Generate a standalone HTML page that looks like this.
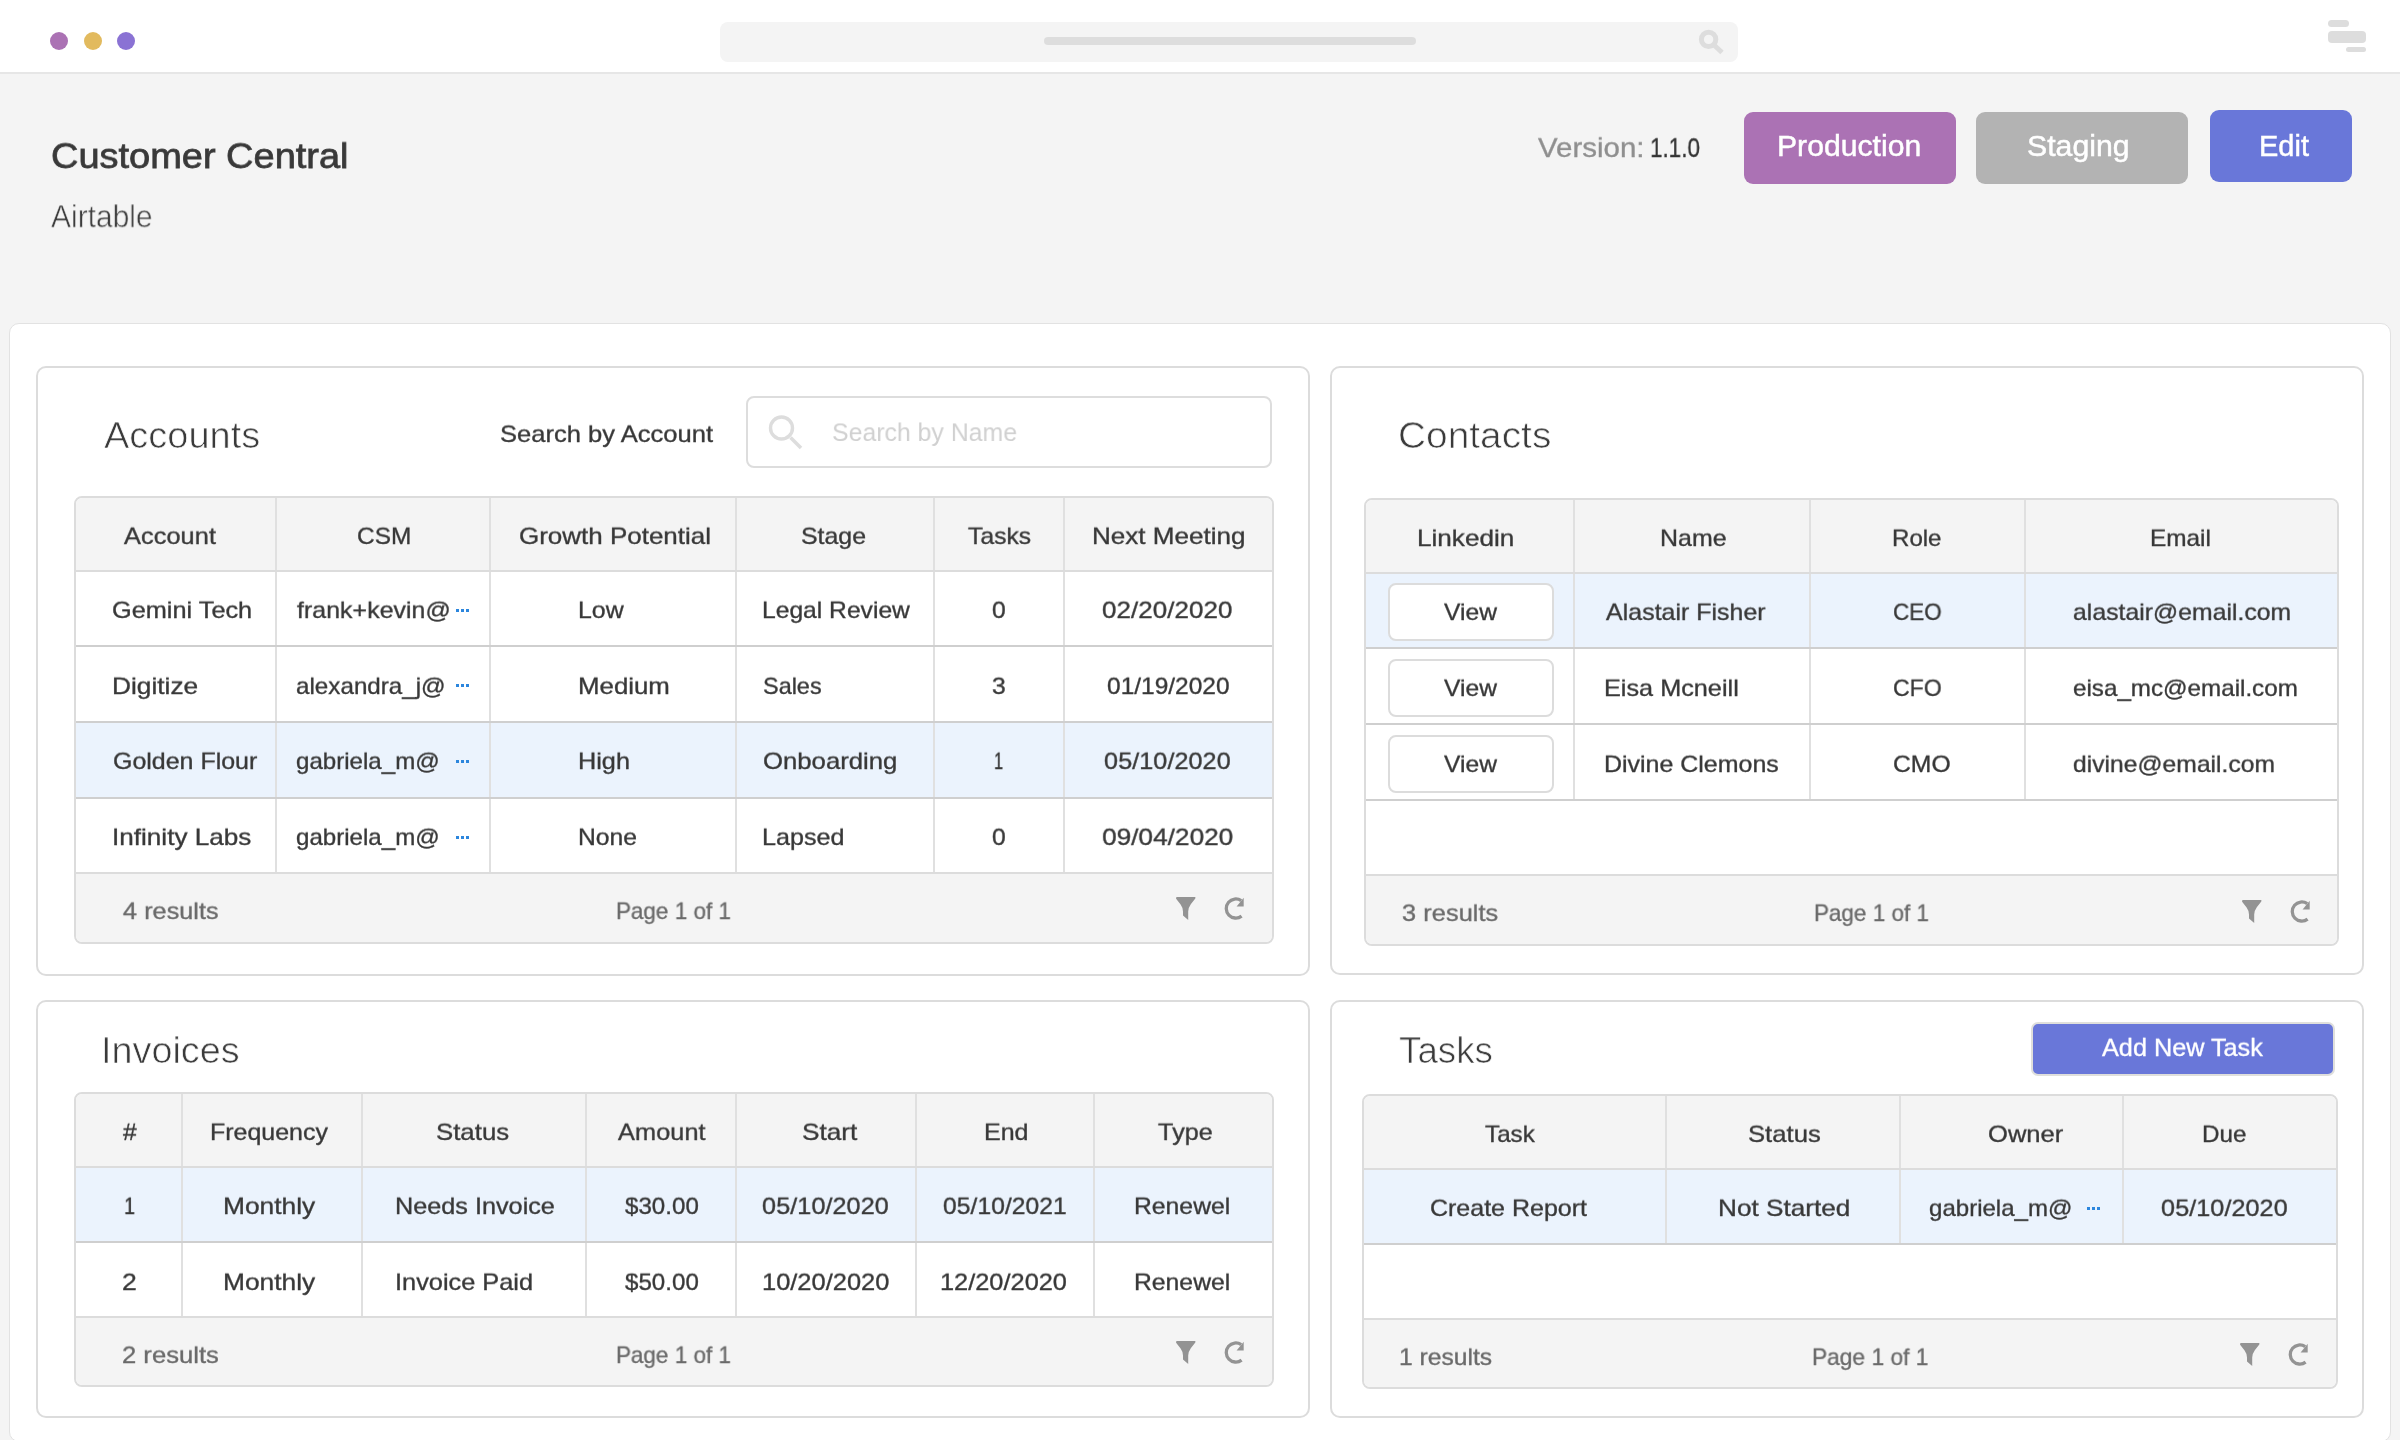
<!DOCTYPE html>
<html><head><meta charset="utf-8"><style>
html,body{margin:0;padding:0}
body{width:2400px;height:1440px;overflow:hidden;position:relative;background:#f4f4f4;font-family:'Liberation Sans', sans-serif}
body>div,body>svg{position:absolute;box-sizing:border-box}
.t{line-height:1;white-space:pre;transform-origin:0 0;will-change:transform}
</style></head><body>
<div style="left:0px;top:0px;width:2400px;height:72px;background:#ffffff;"></div>
<div style="left:0px;top:72px;width:2400px;height:2px;background:#e6e6e6;"></div>
<div style="left:50px;top:32px;width:18px;height:18px;border-radius:50%;background:#ab72b4"></div>
<div style="left:83.5px;top:32px;width:18px;height:18px;border-radius:50%;background:#e2ba5e"></div>
<div style="left:117px;top:32px;width:18px;height:18px;border-radius:50%;background:#8a72d4"></div>
<div style="left:720px;top:22px;width:1018px;height:40px;border-radius:8px;background:#f4f4f4"></div>
<div style="left:1044px;top:37px;width:372px;height:8px;border-radius:4px;background:#dddddd"></div>
<svg style="left:1690px;top:24px" width="40" height="36" viewBox="0 0 40 36"><circle cx="18.6" cy="15.4" r="7.2" fill="none" stroke="#dddddd" stroke-width="5"/><path d="M24 21 L32 28.5" stroke="#dddddd" stroke-width="5"/></svg>
<div style="left:2328px;top:20px;width:21px;height:7px;border-radius:3.5px;background:#dddddd"></div>
<div style="left:2328px;top:31px;width:38px;height:12px;border-radius:4px;background:#dddddd"></div>
<div style="left:2346px;top:47px;width:20px;height:5px;border-radius:2.5px;background:#dddddd"></div>
<div style="left:1744px;top:112px;width:212px;height:72px;border-radius:9px;background:#ab72b4"></div>
<div style="left:1976px;top:112px;width:212px;height:72px;border-radius:9px;background:#b3b3b3"></div>
<div style="left:2210px;top:110px;width:142px;height:72px;border-radius:9px;background:#6977d9"></div>
<div style="left:9px;top:323px;width:2382px;height:1119px;border:1px solid #e2e2e2;border-radius:10px;background:#ffffff"></div>
<div style="left:36px;top:366px;width:1274px;height:610px;border:2px solid #dcdcdc;border-radius:10px;background:#ffffff"></div>
<div style="left:1330px;top:366px;width:1034px;height:609px;border:2px solid #dcdcdc;border-radius:10px;background:#ffffff"></div>
<div style="left:36px;top:1000px;width:1274px;height:418px;border:2px solid #dcdcdc;border-radius:10px;background:#ffffff"></div>
<div style="left:1330px;top:1000px;width:1034px;height:418px;border:2px solid #dcdcdc;border-radius:10px;background:#ffffff"></div>
<div style="left:746px;top:396px;width:526px;height:72px;border:2px solid #dddddd;border-radius:8px;background:#ffffff"></div>
<svg style="left:762px;top:408px" width="48" height="48" viewBox="0 0 48 48"><circle cx="19.5" cy="20" r="11" fill="none" stroke="#dddddd" stroke-width="3.4"/><path d="M28.5 29.5 L39 40" stroke="#dddddd" stroke-width="3.6"/></svg>
<div style="left:74px;top:496px;width:1200px;height:448px;border:2px solid #dcdcdc;border-radius:8px;background:#ffffff;overflow:hidden"><div style="position:absolute;left:0px;top:0px;width:1196px;height:72px;background:#f4f4f4"></div><div style="position:absolute;left:0px;top:225px;width:1196px;height:74px;background:#ebf3fd"></div><div style="position:absolute;left:0px;top:374px;width:1196px;height:70px;background:#f4f4f4"></div><div style="position:absolute;left:199px;top:0px;width:2px;height:374px;background:#e0e0e0"></div><div style="position:absolute;left:413px;top:0px;width:2px;height:374px;background:#e0e0e0"></div><div style="position:absolute;left:659px;top:0px;width:2px;height:374px;background:#e0e0e0"></div><div style="position:absolute;left:857px;top:0px;width:2px;height:374px;background:#e0e0e0"></div><div style="position:absolute;left:987px;top:0px;width:2px;height:374px;background:#e0e0e0"></div><div style="position:absolute;left:0px;top:72px;width:1196px;height:2px;background:#dcdcdc"></div><div style="position:absolute;left:0px;top:147px;width:1196px;height:2px;background:#cfcfcf"></div><div style="position:absolute;left:0px;top:223px;width:1196px;height:2px;background:#cfcfcf"></div><div style="position:absolute;left:0px;top:299px;width:1196px;height:2px;background:#cfcfcf"></div><div style="position:absolute;left:0px;top:374px;width:1196px;height:2px;background:#dcdcdc"></div></div>
<div style="left:456px;top:609px;width:3px;height:3px;background:#2c86dd"></div>
<div style="left:461px;top:609px;width:3px;height:3px;background:#2c86dd"></div>
<div style="left:466px;top:609px;width:3px;height:3px;background:#2c86dd"></div>
<div style="left:456px;top:684px;width:3px;height:3px;background:#2c86dd"></div>
<div style="left:461px;top:684px;width:3px;height:3px;background:#2c86dd"></div>
<div style="left:466px;top:684px;width:3px;height:3px;background:#2c86dd"></div>
<div style="left:456px;top:760px;width:3px;height:3px;background:#2c86dd"></div>
<div style="left:461px;top:760px;width:3px;height:3px;background:#2c86dd"></div>
<div style="left:466px;top:760px;width:3px;height:3px;background:#2c86dd"></div>
<div style="left:456px;top:836px;width:3px;height:3px;background:#2c86dd"></div>
<div style="left:461px;top:836px;width:3px;height:3px;background:#2c86dd"></div>
<div style="left:466px;top:836px;width:3px;height:3px;background:#2c86dd"></div>
<svg style="left:1170px;top:890px" width="80" height="36" viewBox="0 0 80 36"><path d="M6 8.2 Q6 7.1 7.1 7.1 L24.7 7.1 Q26 7.1 25.3 8.4 L20.8 14.2 Q18.2 17.8 18.2 21.5 L18.2 30 L13 25.6 L13 21.5 Q13 17.8 10.6 14.5 L6.3 8.9 Z" fill="#939393"/><path d="M71.6 26.1 A9.55 9.55 0 1 1 71.2 10.6" fill="none" stroke="#939393" stroke-width="3.3"/><path d="M73.7 7.8 L73.7 16.5 L66.6 16.5 Z" fill="#939393"/></svg>
<div style="left:1364px;top:498px;width:975px;height:448px;border:2px solid #dcdcdc;border-radius:8px;background:#ffffff;overflow:hidden"><div style="position:absolute;left:0px;top:0px;width:971px;height:72px;background:#f4f4f4"></div><div style="position:absolute;left:0px;top:74px;width:971px;height:73px;background:#ebf3fd"></div><div style="position:absolute;left:0px;top:374px;width:971px;height:70px;background:#f4f4f4"></div><div style="position:absolute;left:207px;top:0px;width:2px;height:301px;background:#e0e0e0"></div><div style="position:absolute;left:443px;top:0px;width:2px;height:301px;background:#e0e0e0"></div><div style="position:absolute;left:658px;top:0px;width:2px;height:301px;background:#e0e0e0"></div><div style="position:absolute;left:0px;top:72px;width:971px;height:2px;background:#dcdcdc"></div><div style="position:absolute;left:0px;top:147px;width:971px;height:2px;background:#cfcfcf"></div><div style="position:absolute;left:0px;top:223px;width:971px;height:2px;background:#cfcfcf"></div><div style="position:absolute;left:0px;top:299px;width:971px;height:2px;background:#cfcfcf"></div><div style="position:absolute;left:0px;top:374px;width:971px;height:2px;background:#dcdcdc"></div></div>
<div style="left:1388px;top:583px;width:166px;height:58px;border:2px solid #dcdcdc;border-radius:8px;background:#ffffff"></div>
<div style="left:1388px;top:659px;width:166px;height:58px;border:2px solid #dcdcdc;border-radius:8px;background:#ffffff"></div>
<div style="left:1388px;top:735px;width:166px;height:58px;border:2px solid #dcdcdc;border-radius:8px;background:#ffffff"></div>
<svg style="left:2236px;top:893px" width="80" height="36" viewBox="0 0 80 36"><path d="M6 8.2 Q6 7.1 7.1 7.1 L24.7 7.1 Q26 7.1 25.3 8.4 L20.8 14.2 Q18.2 17.8 18.2 21.5 L18.2 30 L13 25.6 L13 21.5 Q13 17.8 10.6 14.5 L6.3 8.9 Z" fill="#939393"/><path d="M71.6 26.1 A9.55 9.55 0 1 1 71.2 10.6" fill="none" stroke="#939393" stroke-width="3.3"/><path d="M73.7 7.8 L73.7 16.5 L66.6 16.5 Z" fill="#939393"/></svg>
<div style="left:74px;top:1092px;width:1200px;height:295px;border:2px solid #dcdcdc;border-radius:8px;background:#ffffff;overflow:hidden"><div style="position:absolute;left:0px;top:0px;width:1196px;height:72px;background:#f4f4f4"></div><div style="position:absolute;left:0px;top:74px;width:1196px;height:73px;background:#ebf3fd"></div><div style="position:absolute;left:0px;top:222px;width:1196px;height:69px;background:#f4f4f4"></div><div style="position:absolute;left:105px;top:0px;width:2px;height:222px;background:#e0e0e0"></div><div style="position:absolute;left:285px;top:0px;width:2px;height:222px;background:#e0e0e0"></div><div style="position:absolute;left:509px;top:0px;width:2px;height:222px;background:#e0e0e0"></div><div style="position:absolute;left:659px;top:0px;width:2px;height:222px;background:#e0e0e0"></div><div style="position:absolute;left:839px;top:0px;width:2px;height:222px;background:#e0e0e0"></div><div style="position:absolute;left:1017px;top:0px;width:2px;height:222px;background:#e0e0e0"></div><div style="position:absolute;left:0px;top:72px;width:1196px;height:2px;background:#dcdcdc"></div><div style="position:absolute;left:0px;top:147px;width:1196px;height:2px;background:#cfcfcf"></div><div style="position:absolute;left:0px;top:222px;width:1196px;height:2px;background:#dcdcdc"></div></div>
<svg style="left:1170px;top:1334px" width="80" height="36" viewBox="0 0 80 36"><path d="M6 8.2 Q6 7.1 7.1 7.1 L24.7 7.1 Q26 7.1 25.3 8.4 L20.8 14.2 Q18.2 17.8 18.2 21.5 L18.2 30 L13 25.6 L13 21.5 Q13 17.8 10.6 14.5 L6.3 8.9 Z" fill="#939393"/><path d="M71.6 26.1 A9.55 9.55 0 1 1 71.2 10.6" fill="none" stroke="#939393" stroke-width="3.3"/><path d="M73.7 7.8 L73.7 16.5 L66.6 16.5 Z" fill="#939393"/></svg>
<div style="left:2031px;top:1022px;width:304px;height:54px;border:2px solid #dfdfdc;border-radius:7px;background:#6977d9"></div>
<div style="left:1362px;top:1094px;width:976px;height:295px;border:2px solid #dcdcdc;border-radius:8px;background:#ffffff;overflow:hidden"><div style="position:absolute;left:0px;top:0px;width:972px;height:72px;background:#f4f4f4"></div><div style="position:absolute;left:0px;top:74px;width:972px;height:73px;background:#ebf3fd"></div><div style="position:absolute;left:0px;top:222px;width:972px;height:69px;background:#f4f4f4"></div><div style="position:absolute;left:301px;top:0px;width:2px;height:149px;background:#e0e0e0"></div><div style="position:absolute;left:535px;top:0px;width:2px;height:149px;background:#e0e0e0"></div><div style="position:absolute;left:758px;top:0px;width:2px;height:149px;background:#e0e0e0"></div><div style="position:absolute;left:0px;top:72px;width:972px;height:2px;background:#dcdcdc"></div><div style="position:absolute;left:0px;top:147px;width:972px;height:2px;background:#cfcfcf"></div><div style="position:absolute;left:0px;top:222px;width:972px;height:2px;background:#dcdcdc"></div></div>
<div style="left:2087px;top:1207px;width:3px;height:3px;background:#2c86dd"></div>
<div style="left:2092px;top:1207px;width:3px;height:3px;background:#2c86dd"></div>
<div style="left:2097px;top:1207px;width:3px;height:3px;background:#2c86dd"></div>
<svg style="left:2234px;top:1336px" width="80" height="36" viewBox="0 0 80 36"><path d="M6 8.2 Q6 7.1 7.1 7.1 L24.7 7.1 Q26 7.1 25.3 8.4 L20.8 14.2 Q18.2 17.8 18.2 21.5 L18.2 30 L13 25.6 L13 21.5 Q13 17.8 10.6 14.5 L6.3 8.9 Z" fill="#939393"/><path d="M71.6 26.1 A9.55 9.55 0 1 1 71.2 10.6" fill="none" stroke="#939393" stroke-width="3.3"/><path d="M73.7 7.8 L73.7 16.5 L66.6 16.5 Z" fill="#939393"/></svg>
<div class="t" style="left:51.17px;top:137px;font-size:37px;color:#393939;font-weight:400;-webkit-text-stroke:0.8px #393939;transform-origin:0 31.49px;transform:scale(1.0261,0.9488)">Customer Central</div>
<div class="t" style="left:50.90px;top:202px;font-size:30px;color:#3c3c3c;font-weight:400;-webkit-text-stroke:0.5px #f4f4f4;transform-origin:0 24.69px;transform:scale(0.9980,1.0634)">Airtable</div>
<div class="t" style="left:1538.20px;top:134px;font-size:28px;color:#8f8f8f;font-weight:400;-webkit-text-stroke:0.35px #8f8f8f;transform-origin:0 23.25px;transform:scale(1.0525,0.9845)">Version:</div>
<div class="t" style="left:1650.20px;top:134px;font-size:28px;color:#333333;font-weight:400;-webkit-text-stroke:0.35px #333333;transform-origin:0 23.25px;transform:scale(0.8017,0.9845)">1.1.0</div>
<div class="t" style="left:1776.78px;top:132px;font-size:28.5px;color:#ffffff;font-weight:400;-webkit-text-stroke:0.45px #ffffff;transform-origin:0 24.25px;transform:scale(1.0586,1.0153)">Production</div>
<div class="t" style="left:2026.84px;top:132px;font-size:28.5px;color:#ffffff;font-weight:400;-webkit-text-stroke:0.45px #ffffff;transform-origin:0 24.25px;transform:scale(1.0617,1.0153)">Staging</div>
<div class="t" style="left:2258.87px;top:132px;font-size:28.5px;color:#ffffff;font-weight:400;-webkit-text-stroke:0.45px #ffffff;transform-origin:0 24.25px;transform:scale(1.0170,1.0153)">Edit</div>
<div class="t" style="left:104.26px;top:418px;font-size:36.5px;color:#3a3a3a;font-weight:400;-webkit-text-stroke:0.7px #ffffff;transform-origin:0 29.69px;transform:scale(1.0399,0.9912)">Accounts</div>
<div class="t" style="left:499.84px;top:422px;font-size:24px;color:#383838;font-weight:400;-webkit-text-stroke:0.35px #383838;transform-origin:0 20.25px;transform:scale(1.0643,0.9713)">Search by Account</div>
<div class="t" style="left:832.46px;top:419px;font-size:26.5px;color:#d0d0d0;font-weight:400;transform-origin:0 22.00px;transform:scale(0.9374,0.9778)">Search by Name</div>
<div class="t" style="left:124.20px;top:525px;font-size:23.2px;color:#383838;font-weight:400;-webkit-text-stroke:0.35px #383838;transform-origin:0 19.25px;transform:scale(1.0964,0.9656)">Account</div>
<div class="t" style="left:356.85px;top:525px;font-size:23.2px;color:#383838;font-weight:400;-webkit-text-stroke:0.35px #383838;transform-origin:0 19.25px;transform:scale(1.0531,0.9656)">CSM</div>
<div class="t" style="left:518.58px;top:525px;font-size:23.2px;color:#383838;font-weight:400;-webkit-text-stroke:0.35px #383838;transform-origin:0 19.25px;transform:scale(1.1201,0.9656)">Growth Potential</div>
<div class="t" style="left:800.63px;top:525px;font-size:23.2px;color:#383838;font-weight:400;-webkit-text-stroke:0.35px #383838;transform-origin:0 19.25px;transform:scale(1.0729,0.9656)">Stage</div>
<div class="t" style="left:967.60px;top:525px;font-size:23.2px;color:#383838;font-weight:400;-webkit-text-stroke:0.35px #383838;transform-origin:0 19.25px;transform:scale(1.0644,0.9656)">Tasks</div>
<div class="t" style="left:1091.95px;top:525px;font-size:23.2px;color:#383838;font-weight:400;-webkit-text-stroke:0.35px #383838;transform-origin:0 19.25px;transform:scale(1.1241,0.9656)">Next Meeting</div>
<div class="t" style="left:111.81px;top:599px;font-size:23.2px;color:#383838;font-weight:400;-webkit-text-stroke:0.35px #383838;transform-origin:0 19.25px;transform:scale(1.0913,0.9656)">Gemini Tech</div>
<div class="t" style="left:297.30px;top:599px;font-size:23.2px;color:#383838;font-weight:400;-webkit-text-stroke:0.35px #383838;transform-origin:0 19.25px;transform:scale(1.0766,0.9656)">frank+kevin@</div>
<div class="t" style="left:577.95px;top:599px;font-size:23.2px;color:#383838;font-weight:400;-webkit-text-stroke:0.35px #383838;transform-origin:0 19.25px;transform:scale(1.0732,0.9656)">Low</div>
<div class="t" style="left:761.98px;top:599px;font-size:23.2px;color:#383838;font-weight:400;-webkit-text-stroke:0.35px #383838;transform-origin:0 19.25px;transform:scale(1.0623,0.9656)">Legal Review</div>
<div class="t" style="left:992.33px;top:599px;font-size:23.2px;color:#383838;font-weight:400;-webkit-text-stroke:0.35px #383838;transform-origin:0 19.25px;transform:scale(1.0727,0.9656)">0</div>
<div class="t" style="left:1102.48px;top:599px;font-size:23.2px;color:#383838;font-weight:400;-webkit-text-stroke:0.35px #383838;transform-origin:0 19.25px;transform:scale(1.1243,0.9656)">02/20/2020</div>
<div class="t" style="left:111.53px;top:675px;font-size:23.2px;color:#383838;font-weight:400;-webkit-text-stroke:0.35px #383838;transform-origin:0 19.25px;transform:scale(1.1329,0.9656)">Digitize</div>
<div class="t" style="left:296.26px;top:675px;font-size:23.2px;color:#383838;font-weight:400;-webkit-text-stroke:0.35px #383838;transform-origin:0 19.25px;transform:scale(1.0433,0.9656)">alexandra_j@</div>
<div class="t" style="left:577.87px;top:675px;font-size:23.2px;color:#383838;font-weight:400;-webkit-text-stroke:0.35px #383838;transform-origin:0 19.25px;transform:scale(1.1139,0.9656)">Medium</div>
<div class="t" style="left:763.09px;top:675px;font-size:23.2px;color:#383838;font-weight:400;-webkit-text-stroke:0.35px #383838;transform-origin:0 19.25px;transform:scale(1.0105,0.9656)">Sales</div>
<div class="t" style="left:992.33px;top:675px;font-size:23.2px;color:#383838;font-weight:400;-webkit-text-stroke:0.35px #383838;transform-origin:0 19.25px;transform:scale(1.0727,0.9656)">3</div>
<div class="t" style="left:1106.64px;top:675px;font-size:23.2px;color:#383838;font-weight:400;-webkit-text-stroke:0.35px #383838;transform-origin:0 19.25px;transform:scale(1.0557,0.9656)">01/19/2020</div>
<div class="t" style="left:112.72px;top:750px;font-size:23.2px;color:#383838;font-weight:400;-webkit-text-stroke:0.35px #383838;transform-origin:0 19.25px;transform:scale(1.0767,0.9656)">Golden Flour</div>
<div class="t" style="left:296.26px;top:750px;font-size:23.2px;color:#383838;font-weight:400;-webkit-text-stroke:0.35px #383838;transform-origin:0 19.25px;transform:scale(1.0390,0.9656)">gabriela_m@</div>
<div class="t" style="left:577.92px;top:750px;font-size:23.2px;color:#383838;font-weight:400;-webkit-text-stroke:0.35px #383838;transform-origin:0 19.25px;transform:scale(1.0889,0.9656)">High</div>
<div class="t" style="left:762.99px;top:750px;font-size:23.2px;color:#383838;font-weight:400;-webkit-text-stroke:0.35px #383838;transform-origin:0 19.25px;transform:scale(1.1092,0.9656)">Onboarding</div>
<div class="t" style="left:994.49px;top:750px;font-size:23.2px;color:#383838;font-weight:400;-webkit-text-stroke:0.35px #383838;transform-origin:0 19.25px;transform:scale(0.7091,0.9656)">1</div>
<div class="t" style="left:1104.31px;top:750px;font-size:23.2px;color:#383838;font-weight:400;-webkit-text-stroke:0.35px #383838;transform-origin:0 19.25px;transform:scale(1.0913,0.9656)">05/10/2020</div>
<div class="t" style="left:111.55px;top:826px;font-size:23.2px;color:#383838;font-weight:400;-webkit-text-stroke:0.35px #383838;transform-origin:0 19.25px;transform:scale(1.1264,0.9656)">Infinity Labs</div>
<div class="t" style="left:296.26px;top:826px;font-size:23.2px;color:#383838;font-weight:400;-webkit-text-stroke:0.35px #383838;transform-origin:0 19.25px;transform:scale(1.0390,0.9656)">gabriela_m@</div>
<div class="t" style="left:577.97px;top:826px;font-size:23.2px;color:#383838;font-weight:400;-webkit-text-stroke:0.35px #383838;transform-origin:0 19.25px;transform:scale(1.0642,0.9656)">None</div>
<div class="t" style="left:761.93px;top:826px;font-size:23.2px;color:#383838;font-weight:400;-webkit-text-stroke:0.35px #383838;transform-origin:0 19.25px;transform:scale(1.0836,0.9656)">Lapsed</div>
<div class="t" style="left:992.33px;top:826px;font-size:23.2px;color:#383838;font-weight:400;-webkit-text-stroke:0.35px #383838;transform-origin:0 19.25px;transform:scale(1.0727,0.9656)">0</div>
<div class="t" style="left:1102.47px;top:826px;font-size:23.2px;color:#383838;font-weight:400;-webkit-text-stroke:0.35px #383838;transform-origin:0 19.25px;transform:scale(1.1313,0.9656)">09/04/2020</div>
<div class="t" style="left:123.40px;top:900px;font-size:23.4px;color:#6a6a6a;font-weight:400;-webkit-text-stroke:0.35px #6a6a6a;transform-origin:0 19.25px;transform:scale(1.0807,0.9713)">4 results</div>
<div class="t" style="left:615.98px;top:900px;font-size:23.4px;color:#6a6a6a;font-weight:400;-webkit-text-stroke:0.35px #6a6a6a;transform-origin:0 19.25px;transform:scale(0.9598,0.9713)">Page 1 of 1</div>
<div class="t" style="left:1398.07px;top:418px;font-size:36.5px;color:#3a3a3a;font-weight:400;-webkit-text-stroke:0.7px #ffffff;transform-origin:0 29.69px;transform:scale(1.0643,0.9912)">Contacts</div>
<div class="t" style="left:1416.65px;top:527px;font-size:23.2px;color:#383838;font-weight:400;-webkit-text-stroke:0.35px #383838;transform-origin:0 19.25px;transform:scale(1.1265,0.9656)">Linkedin</div>
<div class="t" style="left:1659.75px;top:527px;font-size:23.2px;color:#383838;font-weight:400;-webkit-text-stroke:0.35px #383838;transform-origin:0 19.25px;transform:scale(1.0763,0.9656)">Name</div>
<div class="t" style="left:1891.52px;top:527px;font-size:23.2px;color:#383838;font-weight:400;-webkit-text-stroke:0.35px #383838;transform-origin:0 19.25px;transform:scale(1.0378,0.9656)">Role</div>
<div class="t" style="left:2149.80px;top:527px;font-size:23.2px;color:#383838;font-weight:400;-webkit-text-stroke:0.35px #383838;transform-origin:0 19.25px;transform:scale(1.0509,0.9656)">Email</div>
<div class="t" style="left:1443.90px;top:601px;font-size:23.2px;color:#383838;font-weight:400;-webkit-text-stroke:0.35px #383838;transform-origin:0 19.25px;transform:scale(1.0620,0.9656)">View</div>
<div class="t" style="left:1605.90px;top:601px;font-size:23.2px;color:#383838;font-weight:400;-webkit-text-stroke:0.35px #383838;transform-origin:0 19.25px;transform:scale(1.0770,0.9656)">Alastair Fisher</div>
<div class="t" style="left:1892.63px;top:601px;font-size:23.2px;color:#383838;font-weight:400;-webkit-text-stroke:0.35px #383838;transform-origin:0 19.25px;transform:scale(0.9673,0.9656)">CEO</div>
<div class="t" style="left:2072.53px;top:601px;font-size:23.2px;color:#383838;font-weight:400;-webkit-text-stroke:0.35px #383838;transform-origin:0 19.25px;transform:scale(1.0698,0.9656)">alastair@email.com</div>
<div class="t" style="left:1443.90px;top:677px;font-size:23.2px;color:#383838;font-weight:400;-webkit-text-stroke:0.35px #383838;transform-origin:0 19.25px;transform:scale(1.0620,0.9656)">View</div>
<div class="t" style="left:1603.72px;top:677px;font-size:23.2px;color:#383838;font-weight:400;-webkit-text-stroke:0.35px #383838;transform-origin:0 19.25px;transform:scale(1.0892,0.9656)">Eisa Mcneill</div>
<div class="t" style="left:1892.61px;top:677px;font-size:23.2px;color:#383838;font-weight:400;-webkit-text-stroke:0.35px #383838;transform-origin:0 19.25px;transform:scale(0.9936,0.9656)">CFO</div>
<div class="t" style="left:2072.56px;top:677px;font-size:23.2px;color:#383838;font-weight:400;-webkit-text-stroke:0.35px #383838;transform-origin:0 19.25px;transform:scale(1.0427,0.9656)">eisa_mc@email.com</div>
<div class="t" style="left:1443.90px;top:753px;font-size:23.2px;color:#383838;font-weight:400;-webkit-text-stroke:0.35px #383838;transform-origin:0 19.25px;transform:scale(1.0620,0.9656)">View</div>
<div class="t" style="left:1603.75px;top:753px;font-size:23.2px;color:#383838;font-weight:400;-webkit-text-stroke:0.35px #383838;transform-origin:0 19.25px;transform:scale(1.0763,0.9656)">Divine Clemons</div>
<div class="t" style="left:1892.53px;top:753px;font-size:23.2px;color:#383838;font-weight:400;-webkit-text-stroke:0.35px #383838;transform-origin:0 19.25px;transform:scale(1.0654,0.9656)">CMO</div>
<div class="t" style="left:2072.54px;top:753px;font-size:23.2px;color:#383838;font-weight:400;-webkit-text-stroke:0.35px #383838;transform-origin:0 19.25px;transform:scale(1.0644,0.9656)">divine@email.com</div>
<div class="t" style="left:1402.31px;top:902px;font-size:23.4px;color:#6a6a6a;font-weight:400;-webkit-text-stroke:0.35px #6a6a6a;transform-origin:0 19.25px;transform:scale(1.0874,0.9713)">3 results</div>
<div class="t" style="left:1813.98px;top:902px;font-size:23.4px;color:#6a6a6a;font-weight:400;-webkit-text-stroke:0.35px #6a6a6a;transform-origin:0 19.25px;transform:scale(0.9598,0.9713)">Page 1 of 1</div>
<div class="t" style="left:100.76px;top:1033px;font-size:36.5px;color:#3a3a3a;font-weight:400;-webkit-text-stroke:0.7px #ffffff;transform-origin:0 29.69px;transform:scale(1.0352,0.9912)">Invoices</div>
<div class="t" style="left:122.90px;top:1121px;font-size:23.2px;color:#383838;font-weight:400;-webkit-text-stroke:0.35px #383838;transform-origin:0 19.25px;transform:scale(1.0615,0.9656)">#</div>
<div class="t" style="left:209.75px;top:1121px;font-size:23.2px;color:#383838;font-weight:400;-webkit-text-stroke:0.35px #383838;transform-origin:0 19.25px;transform:scale(1.0759,0.9656)">Frequency</div>
<div class="t" style="left:436.09px;top:1121px;font-size:23.2px;color:#383838;font-weight:400;-webkit-text-stroke:0.35px #383838;transform-origin:0 19.25px;transform:scale(1.1125,0.9656)">Status</div>
<div class="t" style="left:617.90px;top:1121px;font-size:23.2px;color:#383838;font-weight:400;-webkit-text-stroke:0.35px #383838;transform-origin:0 19.25px;transform:scale(1.0950,0.9656)">Amount</div>
<div class="t" style="left:801.77px;top:1121px;font-size:23.2px;color:#383838;font-weight:400;-webkit-text-stroke:0.35px #383838;transform-origin:0 19.25px;transform:scale(1.1313,0.9656)">Start</div>
<div class="t" style="left:983.64px;top:1121px;font-size:23.2px;color:#383838;font-weight:400;-webkit-text-stroke:0.35px #383838;transform-origin:0 19.25px;transform:scale(1.0789,0.9656)">End</div>
<div class="t" style="left:1157.50px;top:1121px;font-size:23.2px;color:#383838;font-weight:400;-webkit-text-stroke:0.35px #383838;transform-origin:0 19.25px;transform:scale(1.0898,0.9656)">Type</div>
<div class="t" style="left:123.74px;top:1195px;font-size:23.2px;color:#383838;font-weight:400;-webkit-text-stroke:0.35px #383838;transform-origin:0 19.25px;transform:scale(0.8636,0.9656)">1</div>
<div class="t" style="left:223.23px;top:1195px;font-size:23.2px;color:#383838;font-weight:400;-webkit-text-stroke:0.35px #383838;transform-origin:0 19.25px;transform:scale(1.1367,0.9656)">Monthly</div>
<div class="t" style="left:395.32px;top:1195px;font-size:23.2px;color:#383838;font-weight:400;-webkit-text-stroke:0.35px #383838;transform-origin:0 19.25px;transform:scale(1.0882,0.9656)">Needs Invoice</div>
<div class="t" style="left:624.90px;top:1195px;font-size:23.2px;color:#383838;font-weight:400;-webkit-text-stroke:0.35px #383838;transform-origin:0 19.25px;transform:scale(1.0400,0.9656)">$30.00</div>
<div class="t" style="left:762.31px;top:1195px;font-size:23.2px;color:#383838;font-weight:400;-webkit-text-stroke:0.35px #383838;transform-origin:0 19.25px;transform:scale(1.0922,0.9656)">05/10/2020</div>
<div class="t" style="left:942.83px;top:1195px;font-size:23.2px;color:#383838;font-weight:400;-webkit-text-stroke:0.35px #383838;transform-origin:0 19.25px;transform:scale(1.0658,0.9656)">05/10/2021</div>
<div class="t" style="left:1133.77px;top:1195px;font-size:23.2px;color:#383838;font-weight:400;-webkit-text-stroke:0.35px #383838;transform-origin:0 19.25px;transform:scale(1.0667,0.9656)">Renewel</div>
<div class="t" style="left:121.95px;top:1271px;font-size:23.2px;color:#383838;font-weight:400;-webkit-text-stroke:0.35px #383838;transform-origin:0 19.25px;transform:scale(1.1455,0.9656)">2</div>
<div class="t" style="left:223.23px;top:1271px;font-size:23.2px;color:#383838;font-weight:400;-webkit-text-stroke:0.35px #383838;transform-origin:0 19.25px;transform:scale(1.1367,0.9656)">Monthly</div>
<div class="t" style="left:395.31px;top:1271px;font-size:23.2px;color:#383838;font-weight:400;-webkit-text-stroke:0.35px #383838;transform-origin:0 19.25px;transform:scale(1.0927,0.9656)">Invoice Paid</div>
<div class="t" style="left:624.90px;top:1271px;font-size:23.2px;color:#383838;font-weight:400;-webkit-text-stroke:0.35px #383838;transform-origin:0 19.25px;transform:scale(1.0400,0.9656)">$50.00</div>
<div class="t" style="left:761.70px;top:1271px;font-size:23.2px;color:#383838;font-weight:400;-webkit-text-stroke:0.35px #383838;transform-origin:0 19.25px;transform:scale(1.0974,0.9656)">10/20/2020</div>
<div class="t" style="left:940.01px;top:1271px;font-size:23.2px;color:#383838;font-weight:400;-webkit-text-stroke:0.35px #383838;transform-origin:0 19.25px;transform:scale(1.0939,0.9656)">12/20/2020</div>
<div class="t" style="left:1133.77px;top:1271px;font-size:23.2px;color:#383838;font-weight:400;-webkit-text-stroke:0.35px #383838;transform-origin:0 19.25px;transform:scale(1.0667,0.9656)">Renewel</div>
<div class="t" style="left:121.80px;top:1344px;font-size:23.4px;color:#6a6a6a;font-weight:400;-webkit-text-stroke:0.35px #6a6a6a;transform-origin:0 19.25px;transform:scale(1.0954,0.9713)">2 results</div>
<div class="t" style="left:615.98px;top:1344px;font-size:23.4px;color:#6a6a6a;font-weight:400;-webkit-text-stroke:0.35px #6a6a6a;transform-origin:0 19.25px;transform:scale(0.9598,0.9713)">Page 1 of 1</div>
<div class="t" style="left:1398.59px;top:1033px;font-size:36.5px;color:#3a3a3a;font-weight:400;-webkit-text-stroke:0.7px #ffffff;transform-origin:0 29.69px;transform:scale(1.0066,0.9912)">Tasks</div>
<div class="t" style="left:2101.50px;top:1035px;font-size:25px;color:#ffffff;font-weight:400;-webkit-text-stroke:0.35px #ffffff;transform-origin:0 21.25px;transform:scale(1.0094,0.9567)">Add New Task</div>
<div class="t" style="left:1485.30px;top:1123px;font-size:23.2px;color:#383838;font-weight:400;-webkit-text-stroke:0.35px #383838;transform-origin:0 19.25px;transform:scale(1.0437,0.9656)">Task</div>
<div class="t" style="left:1748.39px;top:1123px;font-size:23.2px;color:#383838;font-weight:400;-webkit-text-stroke:0.35px #383838;transform-origin:0 19.25px;transform:scale(1.1062,0.9656)">Status</div>
<div class="t" style="left:1988.20px;top:1123px;font-size:23.2px;color:#383838;font-weight:400;-webkit-text-stroke:0.35px #383838;transform-origin:0 19.25px;transform:scale(1.1030,0.9656)">Owner</div>
<div class="t" style="left:2202.32px;top:1123px;font-size:23.2px;color:#383838;font-weight:400;-webkit-text-stroke:0.35px #383838;transform-origin:0 19.25px;transform:scale(1.0425,0.9656)">Due</div>
<div class="t" style="left:1430.32px;top:1197px;font-size:23.2px;color:#383838;font-weight:400;-webkit-text-stroke:0.35px #383838;transform-origin:0 19.25px;transform:scale(1.0779,0.9656)">Create Report</div>
<div class="t" style="left:1717.64px;top:1197px;font-size:23.2px;color:#383838;font-weight:400;-webkit-text-stroke:0.35px #383838;transform-origin:0 19.25px;transform:scale(1.1281,0.9656)">Not Started</div>
<div class="t" style="left:1928.66px;top:1197px;font-size:23.2px;color:#383838;font-weight:400;-webkit-text-stroke:0.35px #383838;transform-origin:0 19.25px;transform:scale(1.0368,0.9656)">gabriela_m@</div>
<div class="t" style="left:2160.51px;top:1197px;font-size:23.2px;color:#383838;font-weight:400;-webkit-text-stroke:0.35px #383838;transform-origin:0 19.25px;transform:scale(1.0913,0.9656)">05/10/2020</div>
<div class="t" style="left:1399.45px;top:1346px;font-size:23.4px;color:#6a6a6a;font-weight:400;-webkit-text-stroke:0.35px #6a6a6a;transform-origin:0 19.25px;transform:scale(1.0529,0.9713)">1 results</div>
<div class="t" style="left:1811.56px;top:1346px;font-size:23.4px;color:#6a6a6a;font-weight:400;-webkit-text-stroke:0.35px #6a6a6a;transform-origin:0 19.25px;transform:scale(0.9718,0.9713)">Page 1 of 1</div>
</body></html>
